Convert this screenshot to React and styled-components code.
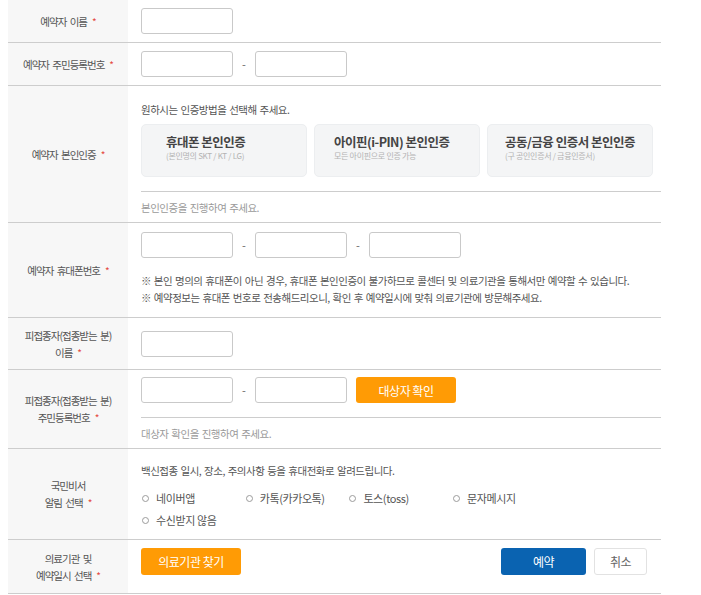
import React from 'react';
import styled, { createGlobalStyle } from 'styled-components';

const GlobalStyle = createGlobalStyle`
  body {
    margin: 0 0 0 8px;
    background: #fff;
    font-family: "Noto Sans CJK KR", "Noto Sans", sans-serif;
    color: #555;
  }
`;

const Table = styled.div`
  width: 653px;
`;

const Row = styled.div`
  display: grid;
  grid-template-columns: 120px 1fr;
  height: ${p => p.$h}px;
  box-sizing: border-box;
  border-bottom: 1px solid #cdcdcd;
`;

const Label = styled.div`
  background: #f7f7f7;
  display: flex;
  align-items: center;
  justify-content: center;
  text-align: center;
  font-size: 10.5px;
  letter-spacing: -1px;
  word-spacing: 2px;
  line-height: 17px;
  color: #555;
`;

const Star = styled.span`
  color: #e5483f;
  font-size: 10px;
  margin-left: 5px;
`;

const Cell = styled.div`
  display: flex;
  flex-direction: column;
  justify-content: ${p => (p.$center ? 'center' : 'flex-start')};
  padding: ${p => p.$pad || '0'};
  padding-left: 13px;
`;

const Line = styled.div`
  display: flex;
  align-items: center;
  margin-top: ${p => p.$mt || 0}px;
`;

const Input = styled.input`
  width: 92px;
  height: 26px;
  box-sizing: border-box;
  border: 1px solid #c9c9c9;
  border-radius: 3px;
  background: #fff;
  padding: 0 6px;
  outline: none;
`;

const Dash = styled.span`
  width: 22px;
  text-align: center;
  font-size: 11px;
  color: #666;
`;

const Text = styled.p`
  margin: ${p => p.$mt || 0}px 0 0;
  font-size: 10.5px;
  letter-spacing: -0.5px;
  word-spacing: 1px;
  line-height: ${p => p.$lh || 18}px;
  color: ${p => (p.$muted ? '#9a9a9a' : '#555')};
`;

const Divider = styled.div`
  height: 1px;
  background: #cdcdcd;
  margin-top: ${p => p.$mt}px;
`;

const Cards = styled.div`
  display: grid;
  grid-template-columns: repeat(3, 166px);
  gap: 7px;
  margin-top: 5px;
`;

const Card = styled.div`
  height: 53px;
  box-sizing: border-box;
  background: #f4f5f6;
  border: 1px solid #eceef0;
  border-radius: 5px;
  padding: 8px 0 0 ${p => p.$pl}px;
`;

const CardTitle = styled.div`
  font-size: 12.5px;
  font-weight: 700;
  letter-spacing: -0.5px;
  line-height: 17px;
  color: #444;
`;

const CardSub = styled.div`
  font-size: 8px;
  letter-spacing: -0.3px;
  line-height: 11px;
  color: #b3b3b3;
`;

const Radios = styled.div`
  display: grid;
  grid-template-columns: repeat(4, 103.7px);
  row-gap: 4px;
  margin-top: 9px;
`;

const Radio = styled.label`
  display: flex;
  align-items: center;
  font-size: 11px;
  line-height: 18px;
  letter-spacing: -0.4px;
  color: #555;
`;

const Dot = styled.span`
  width: 7px;
  height: 7px;
  box-sizing: border-box;
  border: 1px solid #9c9c9c;
  border-radius: 50%;
  margin: 0 7px 0 1px;
`;

const Button = styled.button`
  height: ${p => p.$h || 27}px;
  width: ${p => p.$w}px;
  margin-left: ${p => p.$ml || 0}px;
  border-radius: 3px;
  border: 1px solid ${p => (p.$kind === 'ghost' ? '#e2e2e2' : 'transparent')};
  background: ${p => (p.$kind === 'blue' ? '#0a63b1' : p.$kind === 'ghost' ? '#fff' : '#ff9b05')};
  color: ${p => (p.$kind === 'ghost' ? '#666' : '#fff')};
  font-family: inherit;
  font-size: 12px;
  letter-spacing: -0.5px;
  padding: 0;
  cursor: pointer;
`;

const Actions = styled.div`
  display: flex;
  justify-content: space-between;
  padding-right: 14px;
`;

const Group = styled.div`
  display: flex;
  gap: 8px;
`;

const Title = ({ children }) => (
  <Label>
    <span>
      {children}
      <Star>*</Star>
    </span>
  </Label>
);

const certs = [
  { title: '휴대폰 본인인증', sub: '(본인명의 SKT / KT / LG)', pl: 24 },
  { title: '아이핀(i-PIN) 본인인증', sub: '모든 아이핀으로 인증 가능', pl: 19 },
  { title: '공동/금융 인증서 본인인증', sub: '(구 공인인증서 / 금융인증서)', pl: 17 },
];

const alarms = ['네이버앱', '카톡(카카오톡)', '토스(toss)', '문자메시지', '수신받지 않음'];

export default function App() {
  return (
    <>
      <GlobalStyle />
      <Table>
        <Row $h={43}>
          <Title>예약자 이름</Title>
          <Cell $center>
            <Line><Input /></Line>
          </Cell>
        </Row>

        <Row $h={43}>
          <Title>예약자 주민등록번호</Title>
          <Cell $center>
            <Line><Input /><Dash>-</Dash><Input /></Line>
          </Cell>
        </Row>

        <Row $h={137}>
          <Title>예약자 본인인증</Title>
          <Cell $pad="15px 0 0">
            <Text>원하시는 인증방법을 선택해 주세요.</Text>
            <Cards>
              {certs.map(c => (
                <Card key={c.title} $pl={c.pl}>
                  <CardTitle>{c.title}</CardTitle>
                  <CardSub>{c.sub}</CardSub>
                </Card>
              ))}
            </Cards>
            <Divider $mt={14} />
            <Text $mt={7} $muted>본인인증을 진행하여 주세요.</Text>
          </Cell>
        </Row>

        <Row $h={95}>
          <Title>예약자 휴대폰번호</Title>
          <Cell $pad="9px 0 0">
            <Line><Input /><Dash>-</Dash><Input /><Dash>-</Dash><Input /></Line>
            <Text $mt={14} $lh={17}>※ 본인 명의의 휴대폰이 아닌 경우, 휴대폰 본인인증이 불가하므로 콜센터 및 의료기관을 통해서만 예약할 수 있습니다.</Text>
            <Text $lh={17}>※ 예약정보는 휴대폰 번호로 전송해드리오니, 확인 후 예약일시에 맞춰 의료기관에 방문해주세요.</Text>
          </Cell>
        </Row>

        <Row $h={52}>
          <Title>피접종자(접종받는 분)<br />이름</Title>
          <Cell $center>
            <Line><Input /></Line>
          </Cell>
        </Row>

        <Row $h={79}>
          <Title>피접종자(접종받는 분)<br />주민등록번호</Title>
          <Cell $pad="7px 0 0">
            <Line>
              <Input /><Dash>-</Dash><Input />
              <Button $w={100} $h={26} $ml={9}>대상자 확인</Button>
            </Line>
            <Divider $mt={14} />
            <Text $mt={7} $muted>대상자 확인을 진행하여 주세요.</Text>
          </Cell>
        </Row>

        <Row $h={91}>
          <Title>국민비서<br />알림 선택</Title>
          <Cell $pad="13px 0 0">
            <Text>백신접종 일시, 장소, 주의사항 등을 휴대전화로 알려드립니다.</Text>
            <Radios>
              {alarms.map(a => (
                <Radio key={a}><Dot />{a}</Radio>
              ))}
            </Radios>
          </Cell>
        </Row>

        <Row $h={54}>
          <Title>의료기관 및<br />예약일시 선택</Title>
          <Cell $pad="8px 0 0">
            <Actions>
              <Button $w={100}>의료기관 찾기</Button>
              <Group>
                <Button $w={85} $kind="blue">예약</Button>
                <Button $w={53} $kind="ghost">취소</Button>
              </Group>
            </Actions>
          </Cell>
        </Row>
      </Table>
    </>
  );
}
